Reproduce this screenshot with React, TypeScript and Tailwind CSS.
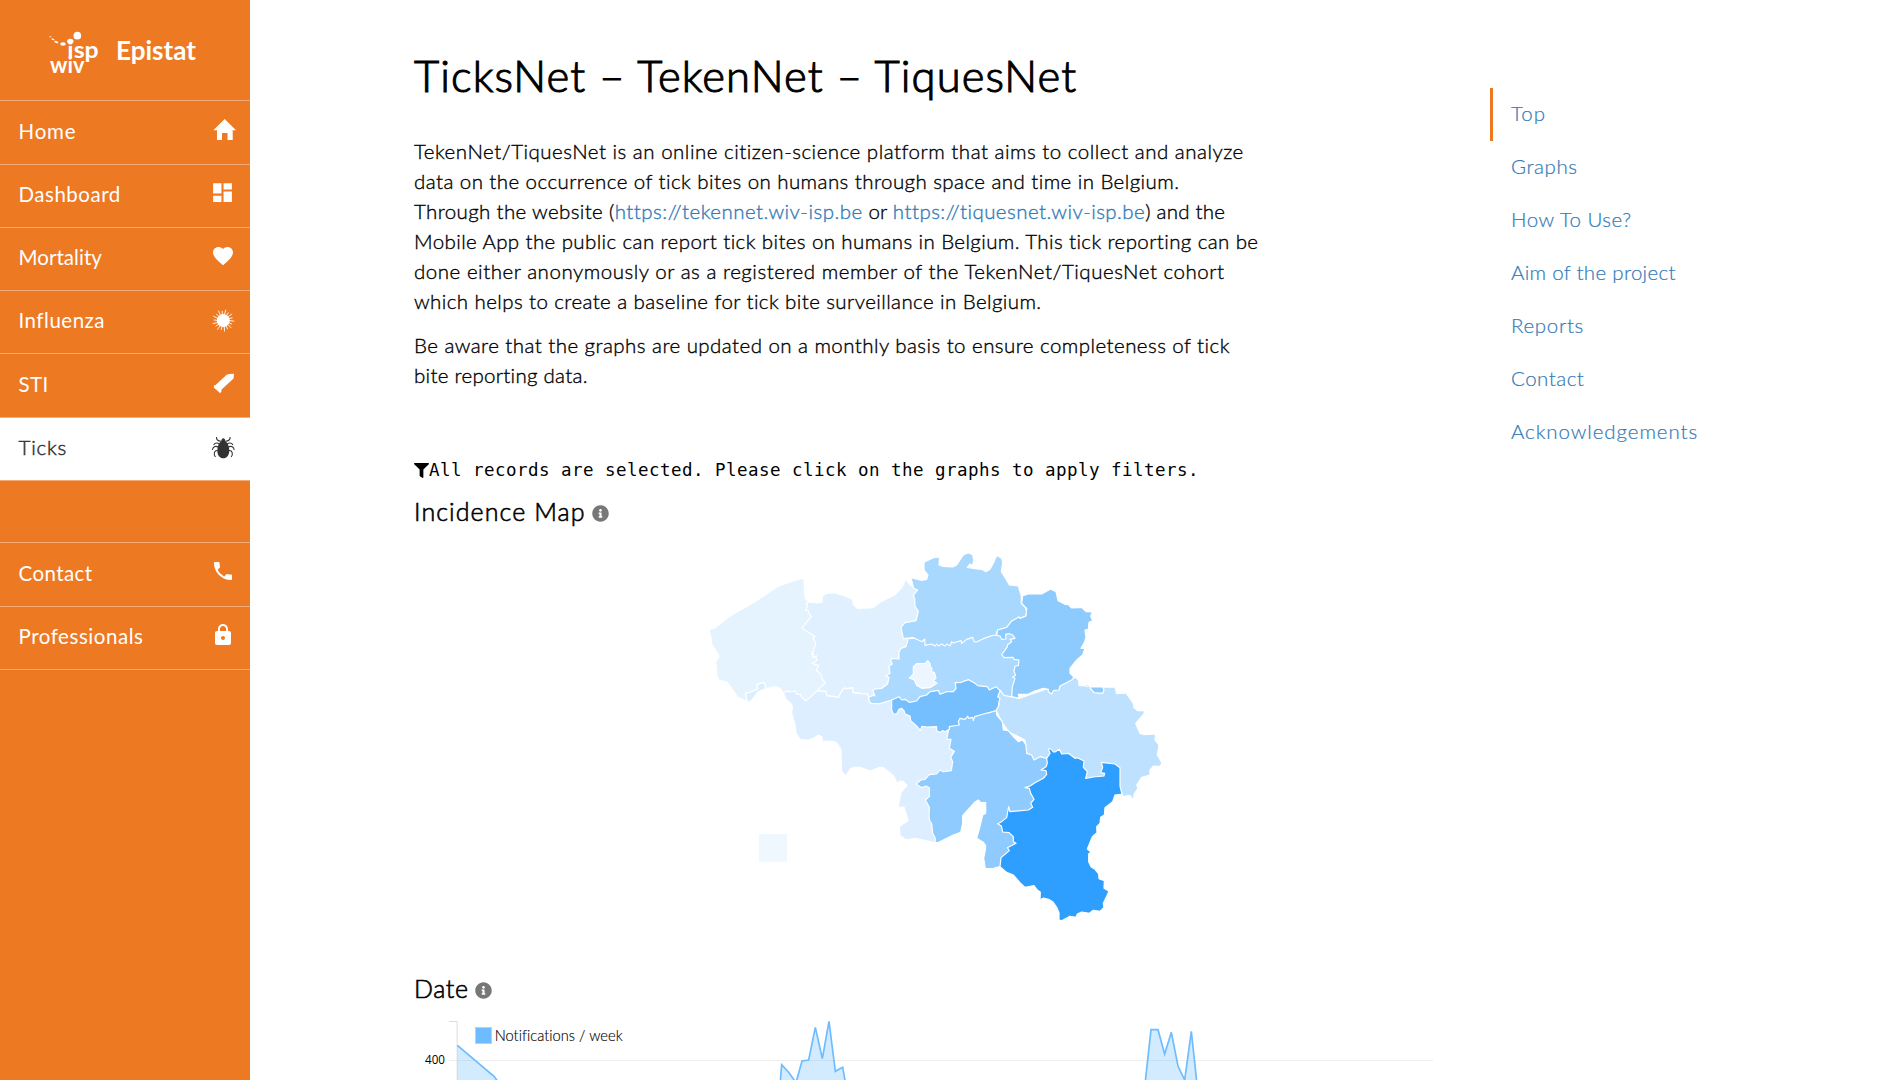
import type { ReactNode } from "react";
import { FaFilter, FaInfoCircle } from "react-icons/fa";
import { MdDashboard, MdFavorite, MdLock, MdPhone } from "react-icons/md";

function HomeIcon() {
  return (
    <svg viewBox="0 0 24 24" className="size-6 overflow-visible" fill="currentColor">
      <path d="M14.7 2 26 13.2H22.7V23H17.5V16H12V23H7V13.2H3.3Z" />
    </svg>
  );
}

function VirusIcon() {
  const spikes = Array.from({ length: 18 }, (_, i) => {
    const a = (i * Math.PI) / 9;
    const r = i % 2 ? 9.6 : 11;
    return `M${13.3 + 5 * Math.cos(a)} ${13.5 + 5 * Math.sin(a)}L${13.3 + r * Math.cos(a + 0.06)} ${13.5 + r * Math.sin(a + 0.06)}`;
  }).join("");
  return (
    <svg viewBox="0 0 24 24" className="size-6 overflow-visible" fill="currentColor">
      <circle cx="13.3" cy="13.5" r="6.5" />
      <path d={spikes} stroke="currentColor" strokeWidth="0.9" />
    </svg>
  );
}

function StiIcon() {
  return (
    <svg viewBox="0 0 24 24" className="size-6 overflow-visible" fill="currentColor">
      <path d="M4 17.7 3.8 15.4 5.3 15.3 16.7 4.8 19 4 24 3.8 23.6 8.5 11.6 19.6 11.5 21.2 10.3 23.3Z" />
    </svg>
  );
}

function TickIcon() {
  return (
    <svg viewBox="0 0 24 24" className="size-6 overflow-visible" fill="currentColor">
      <path d="M13.3 4.2C14.6 4.2 15 5.6 15.4 7C17.6 8.8 19.3 12.4 19.3 16.4C19.3 21 16.8 24.2 13.3 24.2S7.3 21 7.3 16.4C7.3 12.4 9 8.8 11.2 7C11.6 5.6 12 4.2 13.3 4.2Z" />
      <path
        d="M11 7.2C8 7 6 5.6 6.6 3M15.6 7.2C18.6 7 20.6 5.6 20 3M9.6 10C7 8.4 5 8.6 3.6 11M17 10C19.6 8.4 21.6 8.6 23 11M8.2 13C5 11.5 3 13 2.4 16M18.4 13C21.6 11.5 23.6 13 24.2 16M7.6 16.5C4.5 16 3 20 5.5 23M19 16.5C22 16 23.6 20 21.1 23"
        fill="none"
        stroke="currentColor"
        strokeWidth="1.1"
      />
    </svg>
  );
}

function Logo() {
  return (
    <svg viewBox="24 30 156 135" className="mt-[5px] h-[45px] w-[52px] overflow-visible" fill="#fff">
      <circle cx="112" cy="47" r="11.5" />
      <ellipse cx="91" cy="64" rx="9.5" ry="7.5" />
      <ellipse cx="69" cy="72" rx="8.5" ry="5" />
      <ellipse cx="49" cy="66" rx="6" ry="3" transform="rotate(15 49 66)" />
      <ellipse cx="39" cy="58" rx="5" ry="2" transform="rotate(25 39 58)" />
      <ellipse cx="31" cy="50" rx="3" ry="1.5" />
      <text x="82" y="114" fontSize="66" textLength="94" lengthAdjust="spacingAndGlyphs" className="font-[Lato] font-bold">
        isp
      </text>
      <text x="30" y="158" fontSize="66" textLength="103" lengthAdjust="spacingAndGlyphs" className="font-[Lato] font-bold">
        wiv
      </text>
    </svg>
  );
}

type Item = { label?: string; icon?: ReactNode; row: string; track?: string; active?: boolean };

const items: Item[] = [
  { label: "Home", icon: <HomeIcon />, row: "h-16", track: "tracking-[0.800px]" },
  { label: "Dashboard", icon: <MdDashboard size={25} />, row: "h-[63px]", track: "tracking-[0.510px]" },
  { label: "Mortality", icon: <MdFavorite size={24} />, row: "h-[63px]", track: "tracking-[0.050px]" },
  { label: "Influenza", icon: <VirusIcon />, row: "h-[63px]", track: "tracking-[0.500px]" },
  { label: "STI", icon: <StiIcon />, row: "h-16", track: "tracking-[0.400px]" },
  { label: "Ticks", icon: <TickIcon />, row: "h-[63px]", track: "tracking-[0.820px]", active: true },
  { row: "h-[62px]" },
  { label: "Contact", icon: <MdPhone size={24} />, row: "h-16", track: "tracking-[0.420px]" },
  { label: "Professionals", icon: <MdLock size={24} />, row: "h-[63px]", track: "tracking-[0.550px]" },
];

function Sidebar() {
  return (
    <aside className="h-full w-[250px] shrink-0 bg-[#ed7923] text-white">
      <div className="flex h-[100px] items-center gap-4 pl-12">
        <Logo />
        <span className="text-[26px] leading-8 font-bold">Epistat</span>
      </div>
      <nav className="border-b border-[#f4ab77]">
        {items.map((it, i) => (
          <div
            key={i}
            className={`flex items-center justify-between border-t border-[#f4ab77] pr-[15px] pl-[18.5px] ${it.row} ${
              it.active ? "bg-white text-[#333]" : ""
            }`}
          >
            <span className={`pb-1 text-[20.5px] leading-6 ${it.active ? "font-light [-webkit-text-stroke:0.500px]" : ""} ${it.track ?? ""}`}>
              {it.label}
            </span>
            <span className={typeof it.icon === "object" && i !== 0 && i !== 3 && i !== 4 && i !== 5 ? "pb-[7px]" : "pr-px pb-[7px]"}>
              {it.icon}
            </span>
          </div>
        ))}
      </nav>
    </aside>
  );
}

const regions: { name: string; fill: string; d: string }[] = [
  {
    name: "Hainaut",
    fill: "#dceeff",
    d: "M250 459 265 452 285 453 290 462 302 463 305 472 318 482 352 452 378 454 380 467 407 470 415 472 427 450 435 443 440 446 458 443 460 458 505 462 507 482 513 490 540 491 555 486 575 480 680 520 760 560 760 800 703 908 645 895 620 900 600 887 598 862 604 855 624 842 618 820 612 801 594 802 603 758 612 746 621 736 610 725 598 723 593 733 583 711 570 698 548 682 535 683 512 693 480 682 465 681 452 686 437 708 425 695 423 630 415 615 405 606 395 604 366 603 366 590 355 585 342 594 325 601 300 598 288 580 285 555 275 520 277 500 272 490 260 480Z",
  },
  {
    name: "Comines",
    fill: "#dceeff",
    d: "M136 460 150 456 173 446 170 434 188 427 196 431 197 446 175 455 150 487 141 484Z",
  },
  {
    name: "East Flanders",
    fill: "#e0f0ff",
    d: "M322 186 350 189 366 187 367 168 380 160 405 158 440 170 458 178 460 194 472 205 520 203 540 187 585 164 605 143 612 130 616 114 622 125 632 135 650 150 660 220 640 250 630 294 618 320 603 325 597 336 597 357 575 355 572 362 577 372 567 378 570 400 557 408 567 412 563 432 545 445 527 447 520 450 523 470 505 469 503 462 480 461 477 458 460 458 458 443 440 446 435 443 427 450 415 472 407 470 380 467 378 454 352 452 320 440 300 264Z",
  },
  {
    name: "West Flanders",
    fill: "#e5f3ff",
    d: "M27 270 45 263 90 228 165 185 232 140 270 126 312 114 314 165 318 178 326 186 318 192 323 197 317 210 325 212 327 220 334 229 327 238 306 264 345 290 339 296 343 300 347 316 342 324 340 335 334 343 342 343 337 353 350 347 347 356 352 358 346 366 337 370 345 374 356 375 349 391 358 398 365 408 366 417 376 428 352 452 318 482 305 472 302 463 290 462 285 453 270 456 265 452 250 459 240 445 228 440 197 446 195 430 188 427 170 434 173 446 150 456 136 460 141 484 112 471 102 455 84 430 80 426 58 420 50 408 50 378 45 370 57 350 52 337 36 315 33 292Z",
  },
  {
    name: "Flemish Brabant",
    fill: "#abd9ff",
    d: "M618 296 626 293 618 320 603 325 597 336 597 357 575 355 572 362 577 372 567 378 570 400 557 408 567 412 563 432 545 445 527 447 518 450 525 468 520 466 507 471 507 482 513 490 540 491 555 486 575 480 640 510 880 460 912 475 935 472 960 380 950 300 940 278 900 272 780 290Z",
  },
  {
    name: "Antwerp",
    fill: "#a9d8ff",
    d: "M632 112 665 121 680 118 684 105 672 90 672 67 700 53 719 51 717 75 730 79 758 81 770 75 790 45 805 38 818 44 821 60 818 77 810 72 802 82 830 87 845 88 858 95 870 88 880 70 890 46 905 55 908 68 904 95 918 117 928 135 955 138 960 155 964 168 964 190 976 203 980 215 978 228 960 235 957 231 945 240 935 243 920 262 893 270 888 285 875 287 850 296 830 306 822 305 818 292 800 298 785 310 783 302 760 309 755 305 750 318 740 312 735 318 725 312 715 318 710 312 705 318 695 312 675 316 674 297 667 305 655 300 640 293 610 296 603 262 615 248 648 242 655 215 645 198 644 175 640 170 644 160 653 150 641 145 636 125Z",
  },
  {
    name: "Liège",
    fill: "#bee1ff",
    d: "M888 510 897 495 893 470 900 450 912 466 957 475 1060 440 1127 412 1136 420 1137 436 1150 438 1160 433 1175 442 1245 441 1250 461 1278 459 1300 490 1302 503 1312 512 1335 513 1330 524 1307 550 1312 562 1320 580 1335 584 1367 582 1365 600 1377 615 1372 645 1378 655 1386 670 1380 679 1360 678 1350 690 1350 705 1325 712 1310 735 1314 745 1302 763 1300 782 1290 766 1270 770 1264 760 1200 760 1040 720 1002 660 980 640 975 600 925 575 905 545Z",
  },
  {
    name: "Voeren",
    fill: "#8dcbff",
    d: "M1172 440 1208 441 1212 450 1208 460 1182 458 1170 444ZM1155 434 1162 433 1166 438 1158 440Z",
  },
  {
    name: "Limburg",
    fill: "#8dcbff",
    d: "M968 167 985 162 1025 162 1052 147 1068 155 1074 182 1095 193 1105 194 1115 204 1145 202 1158 215 1178 216 1172 228 1178 242 1167 247 1165 268 1155 270 1158 292 1153 308 1143 325 1155 325 1148 345 1130 360 1110 385 1110 400 1122 411 1115 420 1080 438 1077 450 1060 452 1055 462 1045 455 1045 448 1030 445 1000 455 985 462 955 463 957 475 935 470 937 440 945 415 938 412 947 405 942 395 945 378 955 377 957 360 942 358 939 352 912 353 905 343 912 335 922 320 922 315 935 305 930 298 945 295 938 285 928 281 917 283 918 297 905 298 900 288 890 286 893 270 920 262 935 243 957 231 960 235 978 228 980 205 965 190Z",
  },
  {
    name: "Namur",
    fill: "#8fcbff",
    d: "M748 560 740 598 753 598 748 625 763 634 752 652 758 665 754 692 730 695 720 690 710 702 688 704 675 718 663 720 648 732 665 743 678 738 688 743 688 770 676 780 688 802 687 830 690 845 695 850 698 880 706 895 705 908 713 908 760 885 782 877 788 850 788 827 825 786 835 780 842 787 857 788 857 820 848 825 840 860 830 895 850 907 857 917 856 930 851 955 856 986 878 986 900 980 960 900 930 830 1020 815 1020 740 1040 705 1048 680 1040 655 1020 650 1002 660 995 645 980 640 978 615 968 600 955 605 940 590 925 572 910 570 907 545 890 525 888 505 800 520Z",
  },
  {
    name: "Walloon Brabant",
    fill: "#76bfff",
    d: "M575 480 597 470 605 480 615 478 628 487 650 483 660 470 680 465 690 455 715 451 720 463 740 455 760 455 768 446 766 428 785 427 790 424 806 419 825 430 833 437 862 440 868 450 888 440 900 452 893 470 900 475 897 485 895 500 888 512 870 517 850 522 824 530 820 542 818 532 805 535 803 528 795 538 780 535 775 545 778 555 748 560 748 568 735 575 727 572 722 577 710 573 710 560 680 561 666 559 661 571 648 556 632 542 630 528 615 522 612 512 605 505 597 508 590 522 580 522 575 510Z",
  },
  {
    name: "Brussels",
    fill: "#edf6ff",
    d: "M683 362 690 370 691 380 696 385 694 395 703 397 708 414 700 422 711 430 690 443 665 445 650 436 643 420 628 414 640 403 640 380 650 371 675 371Z",
  },
  {
    name: "Luxembourg",
    fill: "#2e9fff",
    d: "M1045 627 1053 627 1060 636 1065 636 1078 628 1085 642 1105 640 1125 655 1132 653 1152 663 1150 682 1162 695 1157 715 1180 711 1212 708 1214 700 1202 698 1208 682 1204 667 1245 672 1260 683 1260 738 1266 762 1245 765 1238 785 1215 803 1213 825 1202 832 1200 850 1190 860 1191 878 1177 890 1162 927 1173 936 1166 942 1166 965 1173 980 1185 988 1196 1002 1197 1016 1213 1022 1212 1045 1227 1054 1210 1090 1212 1102 1200 1114 1180 1111 1168 1120 1145 1116 1132 1122 1128 1132 1110 1129 1085 1142 1077 1140 1077 1118 1070 1102 1058 1085 1048 1079 1030 1074 1020 1080 1021 1057 1012 1050 1002 1037 975 1042 960 1028 940 1005 920 997 900 980 903 953 928 932 922 923 948 910 940 905 940 890 927 878 908 876 904 858 893 851 905 845 920 833 926 800 930 815 985 810 998 802 992 790 1002 778 992 760 988 745 975 743 990 738 1005 728 1030 715 1040 703 1038 692 1023 690 1038 680 1042 670 1040 655 1050 640Z",
  },
];

function IncidenceMap() {
  return (
    <svg viewBox="0 0 1500 1200" className="mt-[14px] ml-[286px] h-[400px] w-[500px]">
      {regions.map((r) => (
        <path key={r.name} d={r.d} fill={r.fill} stroke="#fff" strokeWidth="3.5" strokeLinejoin="round" />
      ))}
      <path d="M177 882H261V965H177Z" fill="#f0f8ff" />
    </svg>
  );
}

const weeks = [
  "172,256 282,349 320,400",
  "1138,400 1145,314 1167,338 1188,368 1206,303 1226,300 1246,202 1267,296 1287,184 1306,334 1328,322 1342,400",
  "2232,400 2253,209 2274,209 2294,282 2314,217 2334,318 2354,360 2374,214 2394,400",
];

function DateChart() {
  return (
    <svg viewBox="42 150 3090 210" className="mt-[7px] h-[70px] w-[1030px]">
      <path d="M148 301.5H3099" stroke="#eee" strokeWidth="3" />
      <path d="M148 184.5H171.5V360" fill="none" stroke="#ddd" strokeWidth="3" />
      <path d="M172 256 282 349 320 400H172Z" fill="#6dbcff" fillOpacity="0.3" />
      {weeks.map((points, i) => (
        <polyline key={i} points={points} fill={i ? "#6dbcff" : "none"} fillOpacity="0.3" stroke="#6dbcff" strokeWidth="5" />
      ))}
      <rect x="226.5" y="202.5" width="48" height="48" fill="#6dbcff" stroke="#a7d6ff" strokeWidth="3" />
      <text x="284" y="242" fontSize="44" textLength="384" className="font-[Lato] font-light" stroke="#000" strokeWidth="0.4">
        Notifications / week
      </text>
      <text x="135" y="312" fontSize="40" textAnchor="end" textLength="60" lengthAdjust="spacingAndGlyphs" className="font-['Open_Sans'] font-normal">
        400
      </text>
    </svg>
  );
}

const toc = [
  { label: "Top", track: "tracking-[1.000px]", active: true },
  { label: "Graphs", track: "tracking-[0.580px]" },
  { label: "How To Use?", track: "tracking-[0.500px]" },
  { label: "Aim of the project", track: "tracking-[0.300px]" },
  { label: "Reports", track: "tracking-[0.680px]" },
  { label: "Contact", track: "tracking-[0.500px]" },
  { label: "Acknowledgements", track: "tracking-[0.910px]" },
];

function SectionTitle({ children, track }: { children: ReactNode; track: string }) {
  return (
    <h2 className="flex h-[30px] items-center gap-[6px] text-[25px] leading-[30px]">
      <span className={`font-light [-webkit-text-stroke:0.600px] ${track}`}>{children}</span>
      <FaInfoCircle size={17} color="#777" className="mt-1" />
    </h2>
  );
}

export default function App() {
  return (
    <div className="flex h-[1080px] overflow-hidden bg-white font-[Lato,sans-serif] text-black [font-variant-ligatures:none]">
      <Sidebar />
      <main className="ml-[164px] w-[1030px] shrink-0 pt-[50px]">
        <h1 className="text-[43.5px] leading-[50px] font-light whitespace-nowrap tracking-[1.110px] [-webkit-text-stroke:1.100px]">
          TicksNet – TekenNet – TiquesNet
        </h1>
        <div className="mt-9 text-[20.5px] leading-[30px] font-light whitespace-nowrap [-webkit-text-stroke:0.350px]">
          <p>
            <span className="tracking-[0.500px]">TekenNet/TiquesNet is an online citizen-science platform that aims to collect and analyze</span>
            <br />
            <span className="tracking-[0.430px]">data on the occurrence of tick bites on humans through space and time in Belgium.</span>
            <br />
            <span className="tracking-[0.360px]">Through the website (</span>
            <a className="tracking-[0.480px] text-[#337ab7]">https://tekennet.wiv-isp.be</a>
            <span className="tracking-[0.200px]"> or </span>
            <a className="tracking-[0.450px] text-[#337ab7]">https://tiquesnet.wiv-isp.be</a>
            <span className="tracking-[0.220px]">) and the</span>
            <br />
            <span className="tracking-[0.390px]">Mobile App the public can report tick bites on humans in Belgium. This tick reporting can be</span>
            <br />
            <span className="tracking-[0.525px]">done either anonymously or as a registered member of the TekenNet/TiquesNet cohort</span>
            <br />
            <span className="tracking-[0.410px]">which helps to create a baseline for tick bite surveillance in Belgium.</span>
          </p>
          <p className="mt-[14px]">
            <span className="tracking-[0.445px]">Be aware that the graphs are updated on a monthly basis to ensure completeness of tick</span>
            <br />
            <span className="tracking-[0.280px]">bite reporting data.</span>
          </p>
        </div>
        <div className="mt-[65px] flex h-[30px] items-center font-['DejaVu_Sans_Mono',monospace] text-[17.5px] leading-[30px] whitespace-nowrap">
          <FaFilter size={15} />
          <span className="tracking-[0.465px]">All records are selected. Please click on the graphs to apply filters.</span>
        </div>
        <section className="mt-[11px]">
          <SectionTitle track="tracking-[1.080px]">Incidence Map</SectionTitle>
          <IncidenceMap />
        </section>
        <section className="mt-[33px]">
          <SectionTitle track="tracking-[0.620px]">Date</SectionTitle>
          <DateChart />
        </section>
      </main>
      <nav className="mt-[88px] ml-[46px] text-[20.5px] font-light text-[#337ab7] [-webkit-text-stroke:0.200px]">
        {toc.map((t) => (
          <a
            key={t.label}
            className={`flex h-[53px] items-center border-l-[3px] pb-1 pl-[18px] leading-6 whitespace-nowrap ${t.track} ${
              t.active ? "border-[#ed7923]" : "border-transparent"
            }`}
          >
            {t.label}
          </a>
        ))}
      </nav>
    </div>
  );
}
